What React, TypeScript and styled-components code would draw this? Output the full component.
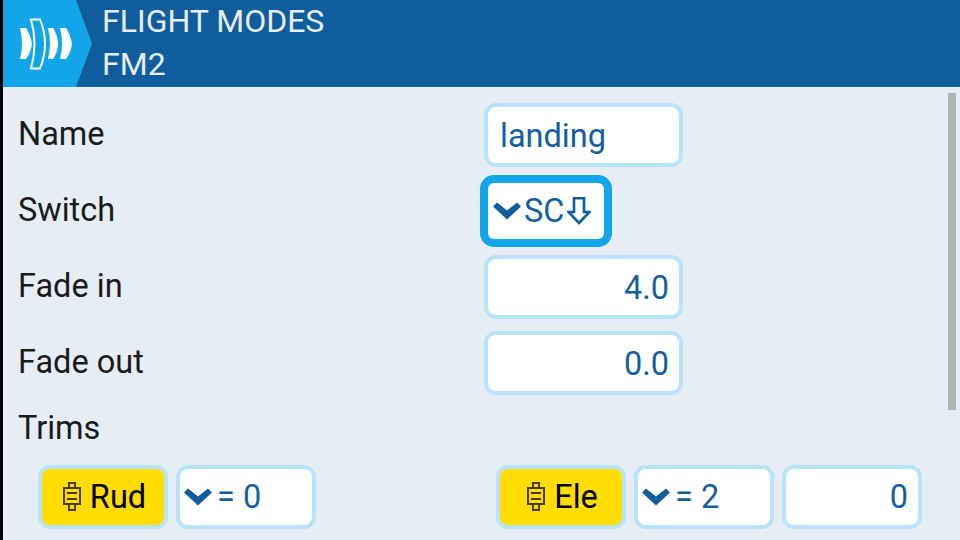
import React from "react";
import styled, { createGlobalStyle } from "styled-components";

const Global = createGlobalStyle`
  html, body { margin: 0; padding: 0; background: #000; }
  body { width: 960px; height: 540px; overflow: hidden; font-family: Roboto, "Liberation Sans", sans-serif; }
`;
const Screen = styled.div`
  width: 957px; height: 540px; margin-left: 3px; background: #e6edf5;
  display: flex; flex-direction: column; overflow: hidden; position: relative;
`;
const Header = styled.header`
  height: 87px; flex: none; background: #0f5d9c; display: flex; color: #e6edf5;
`;
const LogoTab = styled.div`
  width: 89px; height: 87px; flex: none; background: #12a5e9;
  clip-path: polygon(0 0, 73px 0, 89px 43.5px, 73px 87px, 0 87px);
  display: flex; align-items: center; padding-left: 17px; box-sizing: border-box;
`;
const Titles = styled.div`
  padding: 0 0 0 10px; display: flex; flex-direction: column;
`;
const TitleLine = styled.div`
  font-size: 32px; line-height: 43px; height: 43px; white-space: nowrap;
`;
const Body = styled.main`
  flex: 1; display: flex; flex-direction: column; padding: 16px 0 0 0;
`;
const Row = styled.div`
  height: 64px; margin-bottom: 12px; display: flex; align-items: center; flex: none; padding-left: 15px;
`;
const Label = styled.div`
  width: 466px; flex: none; font-size: 32.5px; line-height: 36px; color: #1a1a1a; margin-top: -2px;
`;
const Field = styled.div<{ $align?: string }>`
  box-sizing: border-box; width: 199px; height: 64px; background: #fff; border: 4px solid #b8e3f8; border-radius: 12px;
  display: flex; align-items: center; justify-content: ${(p) => p.$align || "flex-start"};
  padding: 2px 10px 0 12px; font-size: 32.5px; color: #13609f;
`;
const Focused = styled(Field)`
  width: 132px; height: 72px; margin-left: -4px; border: 8px solid #12a5e9; padding: 0 0 0 5px; border-radius: 14px; gap: 3px;
`;
const TrimsLabel = styled.div`
  font-size: 32.5px; line-height: 36px; color: #1a1a1a; padding-left: 15px; height: 36px; margin-top: 3px;
`;
const TrimRow = styled.div`
  display: flex; margin-top: 19px; padding-left: 35px;
`;
const TrimGroup = styled.div`
  display: flex; gap: 8px; &:last-child { margin-left: 180px; }
`;
const Toggle = styled.div`
  box-sizing: border-box; width: 130px; height: 64px; background: #ffdd00; border: 4px solid #b8e3f8; border-radius: 12px;
  display: flex; align-items: center; justify-content: center; gap: 9px; padding: 0 0 0 3px; font-size: 32.5px; color: #000;
`;
const Small = styled(Field)`
  width: 140px; padding: 0 10px 0 4px; gap: 5px;
`;
const Scrollbar = styled.div`
  position: absolute; left: 945px; top: 93px; width: 8px; height: 317px; background: #adb5b3;
`;

const Chevron = () => (
  <svg width="28" height="18" viewBox="0 0 28 18" fill="none" style={{ flex: "none" }}>
    <path d="M0 4.5 L4 0.5 L14 8.5 L24 0.5 L28 4.5 L14 17.5 Z" fill="#0f5d9c" />
  </svg>
);
const ArrowDown = () => (
  <svg width="24" height="28" viewBox="0 0 24 28" fill="none" style={{ flex: "none" }}>
    <path d="M7 1.3 H17 V15 H22.5 L12 26 L1.5 15 H7 Z" stroke="#0f5d9c" strokeWidth="2.6" />
  </svg>
);
const TrimIcon = () => (
  <svg width="18" height="30" viewBox="0 0 18 30" fill="none" style={{ flex: "none" }}>
    <g stroke="#4a3f00" strokeWidth="2">
      <rect x="6" y="1" width="6" height="5" />
      <rect x="1" y="6" width="16" height="16" />
      <rect x="6" y="22" width="6" height="6" />
      <path d="M4 11 H14 M4 17 H14" />
    </g>
  </svg>
);
const Logo = () => (
  <svg width="52" height="52" viewBox="0 0 52 52" fill="none">
    <g fill="#fff">
      <path d="M0 10 H6 Q11 18 12 26 Q11 34 6 41 H0 Q4 26 0 10 Z" />
      <path d="M28 10 H33 Q38 18 38 26 Q38 34 33 41 H28 Q32 26 28 10 Z" />
      <path d="M40 10 H46 Q51 18 52 26 Q51 34 46 41 H40 Q44 26 40 10 Z" />
    </g>
    <path d="M11 1.5 H20 Q25 14 25 26 Q25 38 20 50.5 H11 Q18 26 11 1.5 Z" stroke="#fff" strokeWidth="2" />
  </svg>
);

export default function App() {
  return (
    <>
      <Global />
      <Screen>
        <Header>
          <LogoTab><Logo /></LogoTab>
          <Titles>
            <TitleLine>FLIGHT MODES</TitleLine>
            <TitleLine>FM2</TitleLine>
          </Titles>
        </Header>
        <Body>
          <Row>
            <Label>Name</Label>
            <Field>landing</Field>
          </Row>
          <Row>
            <Label>Switch</Label>
            <Focused><Chevron />SC<ArrowDown /></Focused>
          </Row>
          <Row>
            <Label>Fade in</Label>
            <Field $align="flex-end">4.0</Field>
          </Row>
          <Row>
            <Label>Fade out</Label>
            <Field $align="flex-end">0.0</Field>
          </Row>
          <TrimsLabel>Trims</TrimsLabel>
          <TrimRow>
            <TrimGroup>
              <Toggle><TrimIcon />Rud</Toggle>
              <Small><Chevron />= 0</Small>
            </TrimGroup>
            <TrimGroup>
              <Toggle><TrimIcon />Ele</Toggle>
              <Small><Chevron />= 2</Small>
              <Small $align="flex-end">0</Small>
            </TrimGroup>
          </TrimRow>
        </Body>
        <Scrollbar />
      </Screen>
    </>
  );
}
